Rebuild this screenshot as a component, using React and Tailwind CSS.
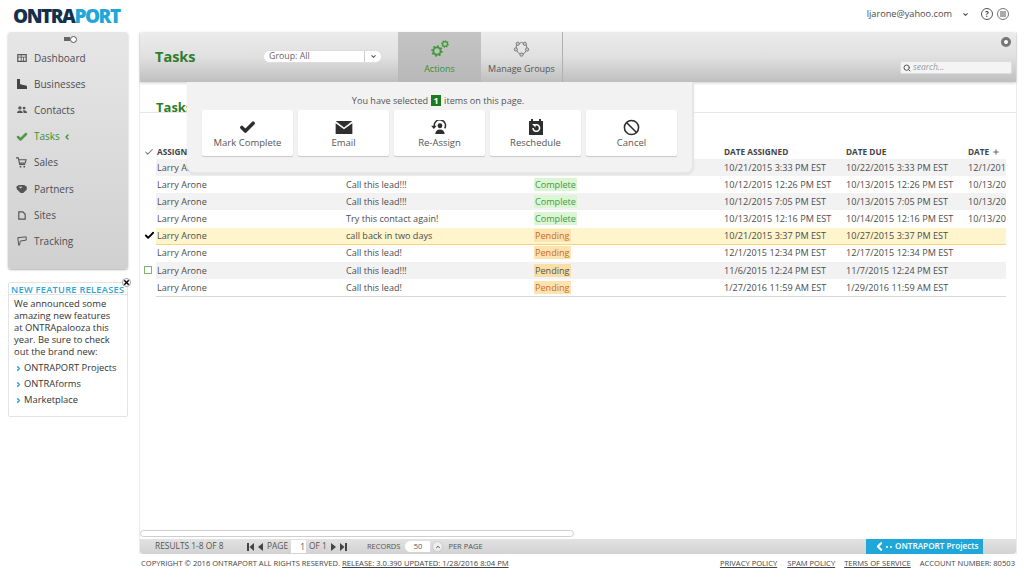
import React from "react";
import { Check, Ban, ChevronLeft, ChevronRight, ChevronDown, ChevronUp, Search, Plus, X } from "lucide-react";

const rows = [
  ["Larry Arone","","Complete","10/21/2015 3:33 PM EST","10/22/2015 3:33 PM EST","12/1/2015","g"],
  ["Larry Arone","Call this lead!!!","Complete","10/12/2015 12:26 PM EST","10/13/2015 12:26 PM EST","10/13/2015",""],
  ["Larry Arone","Call this lead!!!","Complete","10/12/2015 7:05 PM EST","10/13/2015 7:05 PM EST","10/13/2015","g"],
  ["Larry Arone","Try this contact again!","Complete","10/13/2015 12:16 PM EST","10/14/2015 12:16 PM EST","10/13/2015",""],
  ["Larry Arone","call back in two days","Pending","10/21/2015 3:37 PM EST","10/27/2015 3:37 PM EST","","y"],
  ["Larry Arone","Call this lead!","Pending","12/1/2015 12:34 PM EST","12/17/2015 12:34 PM EST","",""],
  ["Larry Arone","Call this lead!!!","Pending","11/6/2015 12:24 PM EST","11/7/2015 12:24 PM EST","","g"],
  ["Larry Arone","Call this lead!","Pending","1/27/2016 11:59 AM EST","1/29/2016 11:59 AM EST","",""],
];

const Gear = ({ x, y, r, c = "#3f9a35" }) => (
  <g transform={`translate(${x} ${y})`}>
    <circle r={r} fill="none" stroke={c} strokeWidth={r * 0.5} />
    <circle r={r * 1.3} fill="none" stroke={c} strokeWidth={r * 0.6} pathLength="16" strokeDasharray="1 1" />
  </g>
);

const nav = [
  ["Dashboard", <svg viewBox="0 0 12 10" className="w-[10px] h-[8px]"><path fill="#555" d="M0 0h12v10H0zM1.5 1.5v2h3v-2zm4 0v2h5v-2zm-4 3v4h3v-4zm4 0v4h2v-4zm3 0v4h2v-4z"/></svg>],
  ["Businesses", <svg viewBox="0 0 12 10" className="w-[12px] h-[10px]"><path fill="#444" d="M1 0h3v5l3 1 1 0 3 1v3H1z"/></svg>],
  ["Contacts", <svg viewBox="0 0 12 9" className="w-[10px] h-[8px]"><path fill="#555" d="M3.5 0a2 2 0 1 1 0 4 2 2 0 0 1 0-4M8.5 .5a1.7 1.7 0 1 1 0 3.4 1.7 1.7 0 0 1 0-3.4M0 8c0-2 1.500-3 3.500-3S7 6 7 8zM8 8c0-1.200-.4-2.200-1-3 2.500-.6 5 .4 5 3z"/></svg>],
  ["Tasks", <Check size={12} strokeWidth={5} className="text-[#4f9a44]" />],
  ["Sales", <svg viewBox="0 0 12 12" className="w-[11px] h-[11px]"><path fill="none" stroke="#555" strokeWidth="1.200" d="M0 1h2.500l1.500 7h6M3 3h8l-1 3.500H4"/><circle cx="5" cy="10.500" r="1" fill="#555"/><circle cx="9" cy="10.500" r="1" fill="#555"/></svg>],
  ["Partners", <svg viewBox="0 0 12 9" className="w-[11px] h-[8px]"><path fill="#555" d="M0 2 3 0h6l3 2v3L8 9H5L1 5z"/><path fill="#ddd" d="M3 2h4L5 4z"/></svg>],
  ["Sites", <svg viewBox="0 0 10 11" className="w-[8px] h-[9px]"><path fill="none" stroke="#555" strokeWidth="1.500" d="M1 1h5l3 3v6H1z"/></svg>],
  ["Tracking", <svg viewBox="0 0 12 12" className="w-[10px] h-[10px]"><path fill="none" stroke="#555" strokeWidth="1.200" d="M1 2 11 1v4L4 6 3 11H2z"/></svg>],
];

const actions = [
  ["Mark Complete", <Check size={17} strokeWidth={5} className="text-[#2e2e2e]" />],
  ["Email", <svg viewBox="0 0 18 14" className="w-[18px] h-[13px]"><path fill="#2e2e2e" d="M0 0h18L9 7zM0 2.500 9 9l9-6.500V14H0z"/></svg>],
  ["Re-Assign", <svg viewBox="0 0 18 16" className="w-[17px] h-[15px]"><path fill="none" stroke="#2e2e2e" strokeWidth="1.600" d="M3.500 7a6 6 0 1 1 11 2"/><path fill="#2e2e2e" d="M0 6h6L3 9.500zM9.500 3.500a2.600 2.600 0 1 1 0 5.200 2.600 2.600 0 0 1 0-5.200M4.500 15c0-3 2-5 5-5s5 2 5 5z"/></svg>],
  ["Reschedule", <svg viewBox="0 0 16 16" className="w-[16px] h-[16px]"><path fill="#2e2e2e" d="M1 2h2V0h2v2h6V0h2v2h2v14H1z"/><path fill="none" stroke="#fff" strokeWidth="1.500" d="M5 9a3.300 3.300 0 1 0 1.200-2.500"/><path fill="#fff" d="M4 5h3.500v3.500z"/></svg>],
  ["Cancel", <Ban size={17} strokeWidth={2.2} className="text-[#2e2e2e]" />],
];

export default function App() {
  return (
    <div className="w-[1024px] h-[586px] overflow-hidden bg-white flex flex-col font-['Open_Sans',sans-serif] text-[#4c4c4c]">
      <header className="h-8 flex items-start justify-between shrink-0 pr-[15px] pt-[6px]">
        <div className="ml-[13px] text-[19px] leading-[20px] font-extrabold tracking-[-1.5px]">
          <span className="text-[#13304d]">ONTRA</span><span className="text-[#1ea7d8]">PORT</span>
        </div>
        <div className="flex items-center h-4 text-[9.2px]">
          <span>ljarone@yahoo.com</span>
          <ChevronDown size={7} strokeWidth={4} className="ml-[10px] text-[#555]" />
          <span className="ml-[12px] w-3 h-3 rounded-full border border-[#555] flex items-center justify-center text-[8px] font-bold leading-none">?</span>
          <span className="ml-[4px] w-3 h-3 rounded-full border border-[#777] flex items-center justify-center"><span className="w-[6px] h-[6px] bg-[#aaa]" /></span>
        </div>
      </header>

      <div className="flex h-[522px] shrink-0 pl-2">
        <aside className="w-[120px] shrink-0 flex flex-col">
          <nav className="h-[237px] rounded-[3px] bg-[linear-gradient(180deg,#e6e6e6,#d0d0d0)] shadow-[0_1px_2px_rgba(0,0,0,0.3)] flex flex-col">
            <div className="h-[10px] flex justify-center items-center gap-0 pt-[4px] ml-[4px]">
              <span className="w-[6px] h-[4px] bg-[#666]" />
              <span className="w-[7px] h-[7px] rounded-full border border-[#555] bg-white" />
            </div>
            <div className="flex flex-col pt-[3px]">
              {nav.map(([label, icon]) => (
                <div key={label} className="h-[26.2px] flex items-center">
                  <span className="w-[26px] flex justify-center shrink-0 pl-[1px]">{icon}</span>
                  <span className={`text-[10px] ${label === "Tasks" ? "text-[#3d8f35]" : "text-[#4d4d55]"}`}>{label}</span>
                  {label === "Tasks" && <ChevronLeft size={8} strokeWidth={4} className="ml-[3px] text-[#3d8f35]" />}
                </div>
              ))}
            </div>
          </nav>
          <div className="relative mt-[13px] h-[135px] border border-[#e4e4e4] rounded-[2px] flex flex-col">
            <div className="h-[11px] mt-[1px] border-b border-[#e4e4e4] pl-[2px] text-[9.2px] leading-[11px] font-semibold tracking-[0.3px] text-[#2ba6d6] whitespace-nowrap">NEW FEATURE RELEASES</div>
            <span className="absolute -right-[4px] -top-[5px] w-[9px] h-[9px] rounded-full bg-white border border-[#999] flex items-center justify-center"><X size={7} strokeWidth={5} className="text-black" /></span>
            <div className="pl-[5px] pt-[3px] text-[9.4px] leading-[12px] text-[#333]">
              <p>We announced some<br />amazing new features<br />at ONTRApalooza this<br />year. Be sure to check<br />out the brand new:</p>
              <ul className="mt-[4px] flex flex-col gap-[4px]">
                {["ONTRAPORT Projects","ONTRAforms","Marketplace"].map((t) => (
                  <li key={t} className="flex items-center">
                    <ChevronRight size={7} strokeWidth={5} className="text-[#1ea7d8] ml-[1px] mr-[2px]" />{t}
                  </li>
                ))}
              </ul>
            </div>
          </div>
        </aside>

        <main className="relative ml-[11px] w-[878px] shrink-0 flex flex-col border-l border-r border-[#ececec]">
          <div className="h-[50px] shrink-0 rounded-t-[3px] bg-[linear-gradient(180deg,#ececec,#e0e0e0_50%,#bfbfbf)] flex shadow-[0_1px_3px_rgba(0,0,0,0.2)] relative">
            <h1 className="ml-[15px] mt-[15px] text-[14.5px] leading-[20px] font-bold text-[#2f7d2a] w-[108px]">Tasks</h1>
            <div className="mt-[18px] w-[119px] h-[13px] flex rounded-full bg-white border border-[#ddd] text-[8.8px] leading-[11px] text-[#666]">
              <span className="flex-1 pl-[5px]">Group: All</span>
              <span className="w-[17px] border-l border-[#ccc] flex items-center justify-center"><ChevronDown size={7} strokeWidth={4} /></span>
            </div>
            <div className="ml-[16px] w-[83px] bg-[linear-gradient(180deg,#c4c4c4,#b8b8b8)] flex flex-col items-center pt-[8px]">
              <svg viewBox="0 0 20 18" className="w-[20px] h-[18px]"><Gear x={7} y={11} r={3.6} /><Gear x={15} y={4} r={2.400} /></svg>
              <span className="mt-[4px] text-[9px] text-[#3d8f35]">Actions</span>
            </div>
            <div className="w-[82px] border-r border-[#b0b0b0] flex flex-col items-center pt-[8px]">
              <svg viewBox="0 0 18 18" className="w-[17px] h-[17px]"><path fill="none" stroke="#777" strokeWidth="1" d="M9 2.500 14 5l1 5-3.500 4.500h-5L3 10l1-5z"/><circle cx="5" cy="4" r="1.700" fill="#ccc" stroke="#777"/><circle cx="12.500" cy="4" r="1.700" fill="#ccc" stroke="#777"/><circle cx="15" cy="10" r="1.700" fill="#ccc" stroke="#777"/><circle cx="9" cy="15.500" r="1.700" fill="#ccc" stroke="#777"/><circle cx="3" cy="10" r="1.700" fill="#ccc" stroke="#777"/></svg>
              <span className="mt-[5px] text-[9px] text-[#555]">Manage Groups</span>
            </div>
            <div className="flex-1 flex flex-col items-end pr-[4px]">
              <span className="mt-[5px] mr-[1px] w-[10px] h-[10px] rounded-full bg-[#777] flex items-center justify-center"><span className="w-[4px] h-[4px] bg-white rounded-full" /></span>
              <div className="mt-[14px] w-[112px] h-[13px] bg-[#f4f4f4] rounded-[2px] border border-[#ddd] flex items-center pl-[2px] gap-[2px]">
                <Search size={8} strokeWidth={3} className="text-[#555]" />
                <span className="text-[8.5px] italic text-[#999]">search...</span>
              </div>
            </div>
          </div>

          <div className="flex-1 min-h-0 flex flex-col">
            <div className="h-[31px] border-b border-[#e6e6e6] pl-[16px] pt-[18px] text-[13px] leading-[15px] font-bold text-[#2f7d2a] shrink-0 overflow-hidden">Tasks</div>
            <div className="relative pl-[16px] mr-[10px] mt-[32px]">
              <div className="absolute left-[4px] top-0 h-[14px] flex items-center"><Check size={10} strokeWidth={2.500} className="text-[#777]" /></div>
              <div className="h-[14px] grid grid-cols-[189px_188px_190px_122px_122px_38px] pl-[1px] text-[8.25px] font-bold leading-[14px] text-[#444] whitespace-nowrap">
                <span>ASSIGNEE</span><span /><span /><span>DATE ASSIGNED</span><span>DATE DUE</span>
                <span className="flex items-center gap-[3px]">DATE<Plus size={8} strokeWidth={3} className="text-[#666]" /></span>
              </div>
              {rows.map((r, i) => (
                <div key={i} className={`relative h-[17.150px] grid grid-cols-[189px_188px_190px_122px_122px_38px] pl-[1px] items-center text-[9.100px] whitespace-nowrap ${r[6] === "g" ? "bg-[#f2f2f2]" : r[6] === "y" ? "bg-[#fff5cc] border-b border-[#f5d778]" : ""}`}>
                  {i === 4 && <Check size={11} strokeWidth={4} className="absolute -left-[12px] text-black" />}
                  {i === 6 && <span className="absolute -left-[12px] w-[8px] h-[8px] border border-[#7ab56e]" />}
                  <span>{r[0]}</span>
                  <span>{r[1]}</span>
                  <span><span className={`inline-block px-[1px] leading-[13px] font-medium ${r[2] === "Complete" ? "bg-[#dcf5d4] text-[#3f9a45]" : i === 6 ? "bg-[#fbdfa6] text-[#555]" : "bg-[#fde3ae] text-[#cf6a2c]"}`}>{r[2]}</span></span>
                  <span>{r[3]}</span>
                  <span>{r[4]}</span>
                  <span className="overflow-hidden">{r[5]}</span>
                </div>
              ))}
              <div className="h-px bg-[#d8d8d8]" />
            </div>
            <div className="flex-1" />
            <div className="h-[7px] w-[434px] rounded-full border border-[#cfcfcf] bg-white mb-[2px] shrink-0" />
          </div>

          <div className="h-[15px] shrink-0 rounded-b-[3px] bg-[linear-gradient(180deg,#e2e2e2,#d2d2d2)] flex items-center text-[8.4px] text-[#555] whitespace-nowrap relative">
            <span className="ml-[15px] w-[92px]">RESULTS 1-8 OF 8</span>
            <span className="flex items-center gap-[2px]">
              <svg viewBox="0 0 8 8" className="w-[8px] h-[8px]"><path fill="#444" d="M0 0h2v8H0zM7 0v8L2.500 4z"/></svg>
              <svg viewBox="0 0 6 8" className="w-[6px] h-[8px]"><path fill="#444" d="M6 0v8L1 4z"/></svg>
            </span>
            <span className="ml-[4px]">PAGE</span>
            <span className="ml-[3px] w-[15px] h-[13px] bg-white text-right pr-[1px] leading-[13px]">1</span>
            <span className="ml-[3px]">OF 1</span>
            <span className="ml-[4px] flex items-center gap-[2px]">
              <svg viewBox="0 0 6 8" className="w-[6px] h-[8px]"><path fill="#444" d="M0 0v8L5 4z"/></svg>
              <svg viewBox="0 0 8 8" className="w-[8px] h-[8px]"><path fill="#444" d="M1 0v8l4.500-4zM6 0h2v8H6z"/></svg>
            </span>
            <span className="ml-[20px] text-[7.5px]">RECORDS</span>
            <span className="ml-[5px] w-[25px] h-[11px] bg-white rounded-l-full text-center leading-[11px] text-[7.5px]">50</span>
            <span className="ml-[2px] w-[11px] h-[11px] rounded-full bg-[#eee] border border-[#ccc] flex items-center justify-center"><ChevronUp size={6} strokeWidth={4} /></span>
            <span className="ml-[5px] text-[7.5px]">PER PAGE</span>
            <div className="absolute right-[33px] top-0 w-[117px] h-[15px] bg-[#1ea7d8] text-white font-semibold text-[8.2px] flex items-center pl-[7px]">
              <ChevronLeft size={13} strokeWidth={4} /><span className="w-[2px] h-[2px] bg-white rounded-full" /><span className="ml-[2px] w-[2px] h-[2px] bg-white rounded-full" /><span className="ml-[3px]">ONTRAPORT Projects</span>
            </div>
          </div>

          <div className="absolute left-[47px] top-[50px] w-[507px] h-[92px] bg-[#f2f2f2] rounded-b-[8px] border-b-2 border-r-2 border-[#e6e6e6] shadow-[0_1px_2px_rgba(0,0,0,0.08)] flex flex-col items-center">
            <div className="mt-[12px] h-[13px] flex items-center text-[9.1px] text-[#555] gap-[3px] pr-[3px]">
              You have selected <span className="w-[10px] h-[11px] bg-[#1f7a1f] text-white font-bold flex items-center justify-center text-[9px]">1</span> items on this page.
            </div>
            <div className="mt-[3px] flex gap-[5px] self-start ml-[15px]">
              {actions.map(([label, icon]) => (
                <div key={label} className="w-[91px] h-[46px] bg-white rounded-[2px] shadow-[0_1px_1px_rgba(0,0,0,0.18)] flex flex-col items-center justify-end pb-[7px]">
                  <span className="h-[18px] flex items-center">{icon}</span>
                  <span className="mt-[1px] text-[9.500px] leading-[12px] text-[#555]">{label}</span>
                </div>
              ))}
            </div>
          </div>
        </main>
      </div>

      <footer className="flex pl-[141px] pr-[9px] pt-[4px] text-[7.600px] leading-[11px] text-[#444] whitespace-nowrap">
        <span>COPYRIGHT © 2016 ONTRAPORT ALL RIGHTS RESERVED.</span>
        <span className="ml-[2px] underline">RELEASE: 3.0.390 UPDATED: 1/28/2016 8:04 PM</span>
        <span className="ml-auto underline">PRIVACY POLICY</span>
        <span className="ml-[10px] underline">SPAM POLICY</span>
        <span className="ml-[9px] underline">TERMS OF SERVICE</span>
        <span className="ml-[9px]">ACCOUNT NUMBER: 80503</span>
      </footer>
    </div>
  );
}
